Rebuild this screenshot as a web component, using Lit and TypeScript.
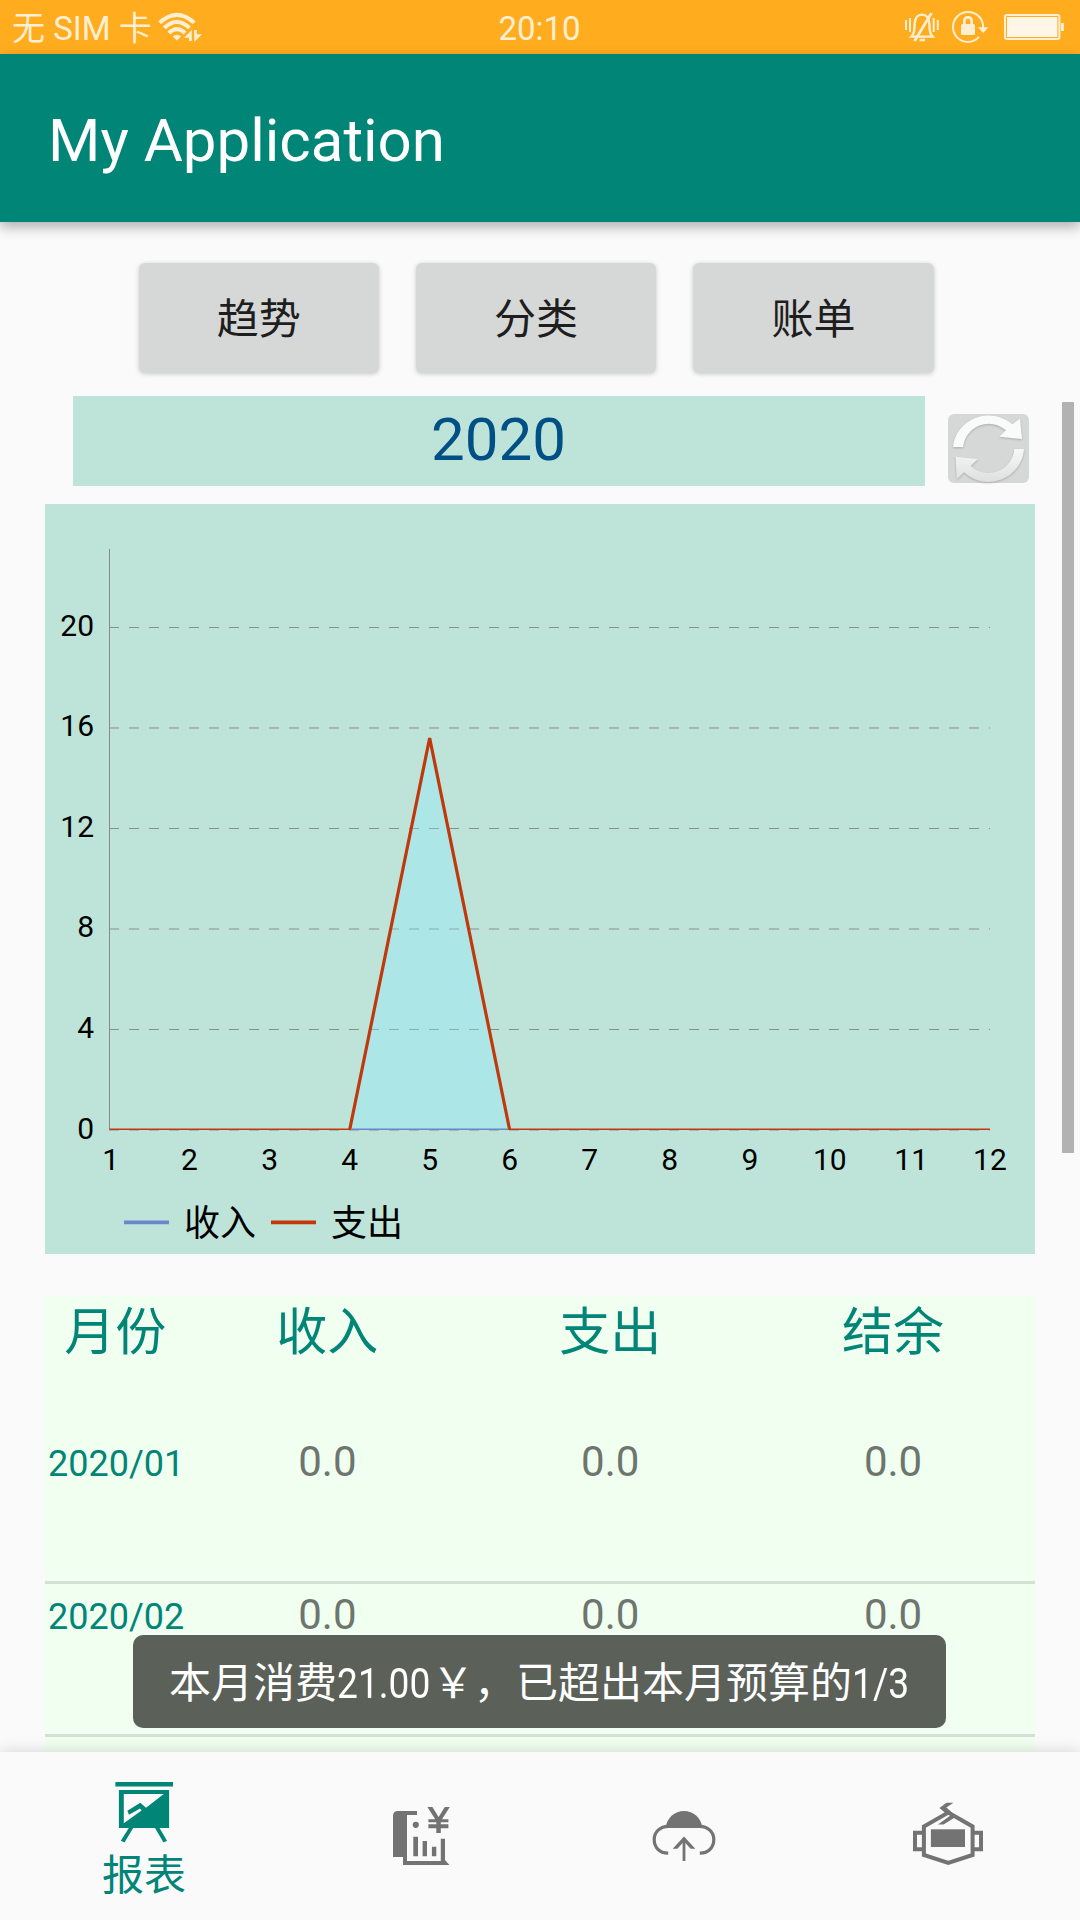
import { LitElement, html, svg, css } from "lit";
import { customElement, property } from "lit/decorators.js";

const FONT = css`Roboto, "Noto Sans CJK SC", sans-serif`;

@customElement("status-bar")
class StatusBar extends LitElement {
  static styles = css`
    :host { display: block; flex: none; height: 54px; background: #ffac1f; color: #ffefd2; font: 33px/58px ${FONT}; }
    .bar { display: grid; grid-template-columns: 1fr auto 1fr; height: 54px; }
    .left { display: flex; padding-left: 12px; }
    .right { display: flex; justify-content: flex-end; padding-right: 10px; }
    .carrier { white-space: pre; }
    .time { padding-right: 1px; }
    svg { display: block; flex: none; }
    .wifi { margin-left: 5px; }
  `;
  render() {
    return html`<div class="bar">
      <div class="left">
        <span class="carrier">无 SIM 卡</span>
        <svg class="wifi" width="46" height="54" viewBox="157 0 46 54" fill="none" stroke="#ffefd2" stroke-width="4">
          <path d="M159.6 22.8Q176.9 6.8 194.2 22.8" />
          <path d="M164.3 28Q176.9 15.6 189.5 28" />
          <path d="M168.8 33Q176.9 25.2 185 33" />
          <path fill="#ffefd2" stroke="none" d="M172.7 36.4Q176.9 33 181.1 36.4L176.9 40.5Z" />
          <path fill="#ffefd2" stroke="none" d="M184 37.8L191.8 30V41H189V37.8ZM194 30H196.8V34.2H202L194.3 42Z" />
        </svg>
      </div>
      <span class="time">20:10</span>
      <div class="right">
        <svg width="166" height="54" viewBox="904 0 166 54" fill="none" stroke="#ffefd2" stroke-width="2">
          <path d="M906 20V30M910 18V32M933.7 18V32M937.8 20V30" />
          <path stroke-width="2.4" d="M911.5 36.6C915 33 914.3 29 914.6 24C915 17 918 14.6 922 14.6C926 14.6 929 17 929.4 24C929.7 29 929 33 932.6 36.6ZM919.6 40H925" />
          <path stroke-width="2.8" d="M931.5 13L914.6 41" />
          <path d="M983.2 28C983.5 18 976 12 968 12C959.4 12 953 19 953 27C953 35.4 959.6 42 968 42C972.4 42 976 40.2 979 36.9" />
          <path fill="#ffefd2" stroke="none" d="M978 27.2H988.4L983.2 33ZM962.5 24H973.5Q975 24 975 25.5V33.5Q975 35 973.5 35H962.5Q961 35 961 33.5V25.5Q961 24 962.5 24Z" />
          <path stroke-width="2.6" d="M964.3 25V21.5Q964.3 17.4 968 17.4Q971.7 17.4 971.7 21.5V25" />
          <rect x="1005" y="15" width="54.4" height="24" rx="2" />
          <rect x="1007" y="17" width="50.4" height="20" fill="#fff6e8" stroke="none" />
          <rect x="1061" y="23" width="3" height="8" fill="#ffefd2" stroke="none" />
        </svg>
      </div>
    </div>`;
  }
}

@customElement("trend-chart")
class TrendChart extends LitElement {
  @property({ attribute: false }) expense: number[] = [];

  static styles = css`
    :host { display: block; background: #bee4da; }
    svg { display: block; font-family: ${FONT}; font-size: 30px; }
    .legend { font-size: 36px; }
  `;

  private x = (i: number) => 64.5 + i * 80.04;
  private y = (v: number) => 626 - (v * 100.5) / 4;
  private points = (values: number[]) => values.map((v, i) => `${this.x(i)},${this.y(v)}`).join(" ");
  // Labels made only of the digit 1 sit optically right of their tick.
  private nudge = (label: string) => (/^1+$/.test(label) ? 1.3 : 0);

  render() {
    const ticks = [0, 4, 8, 12, 16, 20];
    return html`<svg width="990" height="750" viewBox="0 0 990 750">
      <defs><clipPath id="plot"><rect x="64" y="45" width="882" height="581" /></clipPath></defs>
      ${ticks.map((t) => svg`
        <line x1="64" x2="945" y1=${this.y(t)} y2=${this.y(t)} stroke="#8c8b8b" stroke-dasharray="10 10" />
        <text x="49" y=${634.6 - t * 25.15} text-anchor="end">${t}</text>`)}
      <line x1="64.5" x2="64.5" y1="45" y2="626" stroke="#868b8a" />
      <g clip-path="url(#plot)">
        <polygon points="${this.x(0)},626 ${this.points(this.expense)} ${this.x(11)},626" fill="#8ceaff" fill-opacity=".333" />
        <polyline points=${this.points(this.expense)} fill="none" stroke="#c0390d" stroke-width="3.2" stroke-linejoin="bevel" />
        <line x1=${this.x(3) + 1.5} x2=${this.x(5) - 1.5} y1="626" y2="626" stroke="#6888cc" stroke-width="3.2" />
      </g>
      ${this.expense.map((_, i) => svg`<text x=${this.x(i) + this.nudge(String(i + 1))} y="666" text-anchor="middle">${i + 1}</text>`)}
      <g class="legend">
        <line x1="79" x2="124" y1="718.4" y2="718.4" stroke="#6888cc" stroke-width="3.6" />
        <text x="139" y="732">收入</text>
        <line x1="226" x2="271" y1="718.4" y2="718.4" stroke="#c0390d" stroke-width="3.6" />
        <text x="286" y="732">支出</text>
      </g>
    </svg>`;
  }
}

@customElement("month-table")
class MonthTable extends LitElement {
  @property({ attribute: false }) rows: string[][] = [];
  static styles = css`
    :host { display: block; background: #f0fff0; font-family: ${FONT}; text-align: center; }
    .head, .row { display: grid; grid-template-columns: 1fr 2fr 2fr 2fr; align-items: baseline; align-content: start; }
    .head { height: 135px; font-size: 51px; line-height: 73px; color: #008577; }
    .row { height: 150px; border-bottom: 3px solid #d3e0d3; font-size: 42px; line-height: 61px; color: #6e756e; }
    .cell { padding-right: 1px; }
    .month { padding-left: 1px; font-size: 36px; line-height: 60px; color: #008577; white-space: nowrap; }
  `;
  render() {
    return html`
      <div class="head">${["月份", "收入", "支出", "结余"].map((t) => html`<span class="cell">${t}</span>`)}</div>
      ${this.rows.map(([month, ...cells]) => html`<div class="row">
        <span class="month">${month}</span>${cells.map((c) => html`<span class="cell">${c}</span>`)}
      </div>`)}`;
  }
}

@customElement("bottom-nav")
class BottomNav extends LitElement {
  static styles = css`
    :host { display: block; flex: none; height: 168px; background: #fafafa; box-shadow: 0 0 14px rgba(0, 0, 0, .16); color: #737373; font: 42px/48px ${FONT}; }
    .nav { display: grid; grid-template-columns: 288px repeat(3, 264px); height: 168px; }
    .item { display: flex; flex-direction: column; align-items: center; justify-content: center; }
    .active { color: #008577; justify-content: flex-start; padding-top: 24px; }
    svg { display: block; flex: none; }
    .label { margin-top: 4px; }
  `;
  render() {
    return html`<div class="nav">
      <div class="item active">
        <svg width="72" height="72" viewBox="108 1776 72 72" fill="currentColor">
          <path d="M115.4 1782H173V1786.4H115.4ZM128.8 1828H133.2L124.5 1842.6L120.8 1840.8ZM155 1828H159.5L167 1840.8L163.5 1842.6Z" />
          <path fill-rule="evenodd" d="M118.9 1790H169.1V1828H118.9ZM123.8 1794V1823.2L141.6 1810.4L140 1808.4L129 1814.8L127.4 1810.8L140.3 1802.8L146 1807.8L163.8 1794Z" />
        </svg>
        <span class="label">报表</span>
      </div>
      <div class="item">
        <svg width="72" height="72" viewBox="384 1800 72 72" fill="currentColor">
          <path d="M398 1811H417V1815H407V1861H440.8V1838.7H445V1860L449.4 1865H403V1857H393V1816Q393 1811 398 1811Z" />
          <circle cx="415.8" cy="1824.8" r="3.1" />
          <path d="M413.3 1836.7H418V1856.2H413.3ZM422.6 1841H427V1856.2H422.6ZM431.9 1846.7H436.3V1856.2H431.9Z" />
          <path d="M427.4 1807H432.4L438.6 1817L444.8 1807H449.8L442 1819.3H448.4V1822.3H440.8V1824.3H448.4V1828.3H440.8V1833H436.3V1828.3H428.4V1824.3H436.3V1822.3H428.4V1819.3H435.2Z" />
        </svg>
      </div>
      <div class="item">
        <svg width="72" height="72" viewBox="648 1800 72 72" fill="none" stroke="currentColor" stroke-width="3.2">
          <path fill="currentColor" stroke="none" d="M665.6 1828A18.5 19 0 0 1 702.4 1828Z" />
          <path d="M668.2 1853.2C659 1853.2 654.2 1847 654.2 1839.6C654.2 1832 660 1826.3 668.5 1826.3M699.8 1853.2C709 1853.2 713.8 1847 713.8 1839.6C713.8 1832 708 1826.3 699.5 1826.3" />
          <path d="M684 1838V1861" stroke-width="2.8" />
          <path fill="currentColor" stroke="none" d="M684 1836.6L695.3 1848.8H690.6L684 1841.6L677.4 1848.8H672.7Z" />
        </svg>
      </div>
      <div class="item">
        <svg width="72" height="72" viewBox="912 1800 72 72" fill="none" stroke="currentColor" stroke-width="4">
          <path d="M923.9 1826.4L948.3 1812.6L972.6 1826.4V1855L948.3 1862.8L923.9 1855Z" />
          <path d="M923 1832.7H915V1849.3H923M973.5 1832.7H981V1849.3H973.5" />
          <rect x="930.9" y="1829.3" width="34.1" height="17.7" fill="currentColor" stroke="none" />
          <path fill="currentColor" stroke="none" d="M946.5 1802.7H953.4L946.4 1807.6L952 1812.6L947.8 1815L939.4 1808Z" />
          <path fill="currentColor" stroke="none" d="M938 1824.6L951.8 1814.5L956 1816.8L943.5 1824.6Z" />
        </svg>
      </div>
    </div>`;
  }
}

@customElement("app-root")
class AppRoot extends LitElement {
  static styles = css`
    :host { display: flex; flex-direction: column; position: relative; width: 1080px; height: 1920px; overflow: hidden; background: #fafafa; font-family: ${FONT}; }
    .appbar { flex: none; height: 168px; box-sizing: border-box; padding-left: 48px; background: #008577; color: #fff; font-size: 60px; line-height: 173px; box-shadow: 0 5px 12px rgba(0, 0, 0, .3); z-index: 1; }
    .content { flex: 1; min-height: 0; overflow: hidden; position: relative; padding: 41px 45px 0; }
    .tabs { display: flex; gap: 37px; padding-left: 93.5px; }
    .tab { width: 240.4px; height: 110px; box-sizing: border-box; padding-top: 2px; border-radius: 6px; background: #d6d7d7; color: #1e1e1e; font-size: 42px; line-height: 110px; text-align: center; box-shadow: 0 1px 5px rgba(0, 0, 0, .2); }
    .period { display: flex; height: 90px; margin: 23px 0 18px 28px; }
    .year { width: 852px; box-sizing: border-box; padding-right: 1px; background: #bee4da; color: #005086; font-size: 60px; line-height: 87px; text-align: center; }
    .refresh { width: 81px; height: 69px; margin: 18px 0 0 23px; border-radius: 6px; background: #d6d7d7; }
    .refresh svg { display: block; overflow: visible; filter: drop-shadow(0 1px 1px rgba(0, 0, 0, .2)); }
    .chart { margin-bottom: 42px; }
    .scrollbar { position: absolute; left: 1062px; top: 180px; width: 12px; height: 751px; background: #b2b2b2; }
    .nav { z-index: 1; }
    .toast { position: absolute; z-index: 2; left: 133px; top: 1635px; width: 813px; height: 93px; box-sizing: border-box; padding: 2px 36px 0; border-radius: 10px; background: #5b6159; color: #fff; font-size: 42px; line-height: 93px; display: flex; white-space: nowrap; }
    .narrow { display: inline-block; transform: scaleX(.885); transform-origin: 0 50%; }
    .amount { margin-right: -10.6px; }
    .share { margin-right: -7px; }
  `;
  render() {
    return html`
      <status-bar></status-bar>
      <div class="appbar">My Application</div>
      <div class="content">
        <div class="tabs">${["趋势", "分类", "账单"].map((t) => html`<div class="tab">${t}</div>`)}</div>
        <div class="period">
          <div class="year">2020</div>
          <div class="refresh">
            <svg width="81" height="69" viewBox="1044 522 243 207">
              <defs>
                <linearGradient id="sheen" gradientUnits="userSpaceOnUse" x1="0" y1="522" x2="0" y2="730">
                  <stop offset=".45" stop-color="#fafafa" /><stop offset="1" stop-color="#dedede" />
                </linearGradient>
              </defs>
              <path fill="url(#sheen)" d="M1059 621A107 104 0 0 1 1237 553L1260 536L1266 597L1198 590L1218 571A78 78 0 0 0 1089 621Z" />
              <path fill="url(#sheen)" d="M1272 627A107 106 0 0 1 1092 697L1070 718L1067 650L1133 657L1112 678A78 78 0 0 0 1243 627Z" />
            </svg>
          </div>
        </div>
        <trend-chart class="chart" .expense=${[0, 0, 0, 0, 15.6, 0, 0, 0, 0, 0, 0, 0]}></trend-chart>
        <month-table .rows=${["2020/01", "2020/02", "2020/03"].map((m) => [m, "0.0", "0.0", "0.0"])}></month-table>
        <div class="scrollbar"></div>
      </div>
      <bottom-nav class="nav"></bottom-nav>
      <div class="toast">本月消费<span class="narrow amount">21.00</span>￥，已超出本月预算的<span class="narrow share">1/3</span></div>`;
  }
}
